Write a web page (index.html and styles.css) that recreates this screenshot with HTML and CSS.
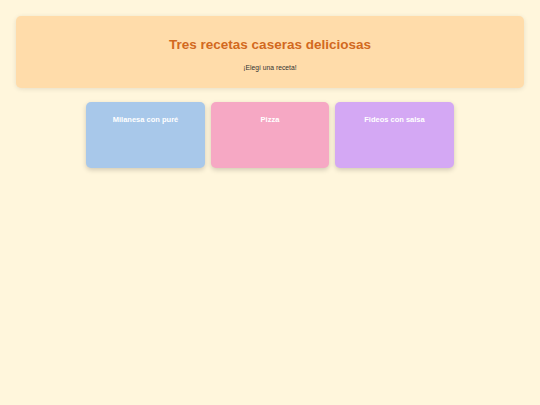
FILE: index.html
```html
<!DOCTYPE html>
<html lang="es">
<head>
<meta charset="utf-8">
<link rel="stylesheet" href="styles.css">
</head>
<body>
<header class="hero">
  <h1 class="title">Tres recetas caseras deliciosas</h1>
  <p class="subtitle">¡Elegí una receta!</p>
</header>
<main class="cards">
  <div class="card card-blue">Milanesa con puré</div>
  <div class="card card-pink">Pizza</div>
  <div class="card card-purple">Fideos con salsa</div>
</main>
</body>
</html>
```
FILE: styles.css
```css
html, body { margin: 0; padding: 0; }
body {
  background: #fff6dc;
  font-family: "Liberation Sans", Arial, sans-serif;
  padding: 16px;
  min-height: 405px;
  box-sizing: border-box;
}
.hero {
  background: #ffdcaa;
  border-radius: 5px;
  box-shadow: 0 1px 5px rgba(0,0,0,0.1);
  padding: 20.5px 10px 16px;
  text-align: center;
}
.title {
  margin: 0;
  font-size: 13.5px;
  line-height: 16px;
  color: #d2691e;
  font-weight: bold;
}
.subtitle {
  margin: 11px 0 0;
  font-size: 6.75px;
  line-height: 8px;
  color: #333;
}
.cards {
  display: flex;
  justify-content: center;
  gap: 6px;
  margin-top: 14px;
}
.card {
  width: 118.5px;
  height: 66.5px;
  border-radius: 5px;
  box-shadow: 0 2px 5px rgba(0,0,0,0.18);
  color: #fff;
  font-weight: bold;
  font-size: 7.5px;
  line-height: 9px;
  text-align: center;
  padding-top: 13.5px;
  box-sizing: border-box;
}
.card-blue { background: #a8c8ea; }
.card-pink { background: #f6a8c4; }
.card-purple { background: #d4a8f4; }
```
